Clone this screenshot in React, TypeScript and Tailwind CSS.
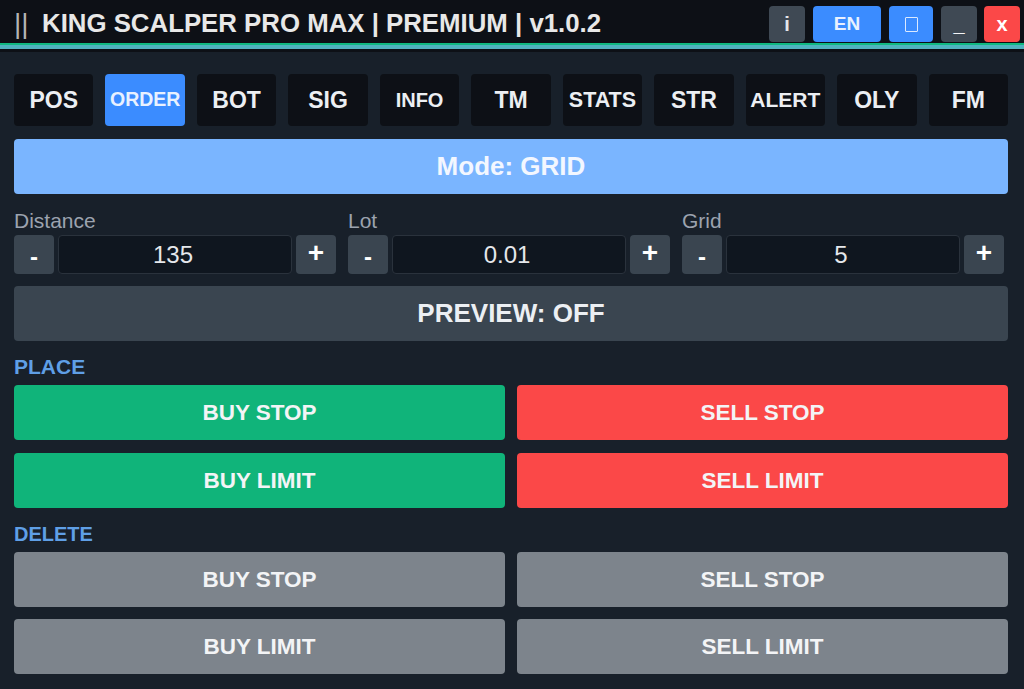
import React from "react";

const tabs = [
  { name: "POS", size: "text-[23px]" },
  { name: "ORDER", size: "text-[19.5px]" },
  { name: "BOT", size: "text-[23px]" },
  { name: "SIG", size: "text-[23px]" },
  { name: "INFO", size: "text-[20px]" },
  { name: "TM", size: "text-[23px]" },
  { name: "STATS", size: "text-[21.5px]" },
  { name: "STR", size: "text-[23px]" },
  { name: "ALERT", size: "text-[21px]" },
  { name: "OLY", size: "text-[23px]" },
  { name: "FM", size: "text-[23px]" },
];

function Stepper({ label, value }: { label: string; value: string }) {
  return (
    <div className="flex w-[322px] flex-col">
      <div className="h-[26px] pt-[1px] text-[21px] leading-[21px] text-[#9ca3af]">{label}</div>
      <div className="flex gap-1">
        <button className="h-[39px] w-10 rounded bg-[#3a4550] pt-1 text-[24px] leading-none font-bold text-white">-</button>
        <div className="flex h-[39px] w-[234px] items-center justify-center rounded border border-[#2a323c] bg-[#0f161f] pr-1 text-[24px] text-[#e5e7eb]">
          {value}
        </div>
        <button className="h-[39px] w-10 rounded bg-[#3a4550] pb-1 text-[28px] leading-none font-bold text-white">+</button>
      </div>
    </div>
  );
}

function ActionButton({ label, color }: { label: string; color: string }) {
  return (
    <button className={`h-[55px] rounded text-[22.5px] font-bold text-[#f3f4f6] ${color}`}>{label}</button>
  );
}

export default function App() {
  return (
    <div className="flex h-[689px] w-[1024px] flex-col overflow-hidden bg-[#18202a] font-['Liberation_Sans',Arial,sans-serif]">
      {/* Title bar */}
      <div className="flex h-[43px] items-center justify-between bg-[#0d1016] pr-1 pl-[14px]">
        <div className="flex items-center pt-1 text-[25.8px] font-bold text-[#e8e8e8]">
          <span className="w-[28px] text-[28px] font-normal text-[#b4b4b4]">||</span>
          <span>KING SCALPER PRO MAX | PREMIUM | v1.0.2</span>
        </div>
        <div className="mt-[5px] flex items-center gap-2">
          <button className="h-9 w-9 rounded bg-[#3f4954] text-[20px] font-bold text-[#e5e7eb]">i</button>
          <button className="h-9 w-[68px] rounded bg-[#3b8cff] text-[19px] font-bold text-[#e8f1ff]">EN</button>
          <button className="flex h-9 w-11 items-center justify-center rounded bg-[#3b8cff]">
            <span className="h-[15px] w-[13px] rounded-[1px] border-[1.5px] border-[#dbe9ff]"></span>
          </button>
          <button className="h-9 w-9 rounded bg-[#3f4954] text-[20px] font-bold text-[#f3f4f6]">_</button>
          <button className="-ml-px h-9 w-9 rounded bg-[#fb4848] text-[20px] font-bold text-white">x</button>
        </div>
      </div>
      <div className="h-[2px] bg-[#10b981]"></div>
      <div className="h-1 bg-[#4fb3bf]"></div>
      <div className="h-[3px] bg-[#0d1016]"></div>

      <div className="flex flex-col pt-[22px] pr-4 pl-[14px]">
        {/* Tabs */}
        <div className="grid grid-cols-11 gap-3">
          {tabs.map((t) => (
            <button
              key={t.name}
              className={`h-[52px] rounded font-bold ${t.size} ${
                t.name === "ORDER" ? "bg-[#3b8cff] text-[#e8f1ff]" : "bg-[#0d1016] text-[#eceff3]"
              }`}
            >
              {t.name}
            </button>
          ))}
        </div>

        <button className="mt-[13px] h-[55px] rounded bg-[#7ab5ff] text-[26px] font-bold text-[#f3f7ff]">Mode: GRID</button>

        <div className="mt-[15px] flex gap-3">
          <Stepper label="Distance" value="135" />
          <Stepper label="Lot" value="0.01" />
          <Stepper label="Grid" value="5" />
        </div>

        <button className="mt-3 h-[55px] rounded bg-[#3a4550] text-[26px] font-bold text-[#eceff3]">PREVIEW: OFF</button>

        <div className="mt-[14px] h-[30px] text-[21px] leading-[24px] font-bold text-[#5f9fe6]">PLACE</div>
        <div className="grid grid-cols-2 gap-x-3 gap-y-[13px]">
          <ActionButton label="BUY STOP" color="bg-[#10b47a]" />
          <ActionButton label="SELL STOP" color="bg-[#fb4848]" />
          <ActionButton label="BUY LIMIT" color="bg-[#10b47a]" />
          <ActionButton label="SELL LIMIT" color="bg-[#fb4848]" />
        </div>

        <div className="mt-[14px] h-[30px] text-[20px] leading-[24px] font-bold text-[#5f9fe6]">DELETE</div>
        <div className="grid grid-cols-2 gap-x-3 gap-y-3">
          <ActionButton label="BUY STOP" color="bg-[#7d848c]" />
          <ActionButton label="SELL STOP" color="bg-[#7d848c]" />
          <ActionButton label="BUY LIMIT" color="bg-[#7d848c]" />
          <ActionButton label="SELL LIMIT" color="bg-[#7d848c]" />
        </div>
      </div>
    </div>
  );
}
